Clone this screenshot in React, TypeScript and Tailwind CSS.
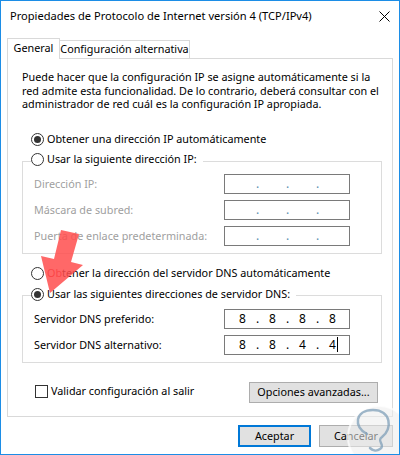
const font = { fontFamily: '"Noto Sans", "Open Sans", sans-serif' };

const Radio = ({ checked }: { checked?: boolean }) => (
	<span className="w-[13px] h-[13px] rounded-full border border-[#333] bg-white flex items-center justify-center shrink-0">
		{checked && <span className="w-[7px] h-[7px] rounded-full bg-[#333]" />}
	</span>
);

const IpBox = ({ parts, cursor }: { parts?: string[]; cursor?: boolean }) => {
	const vals = parts ?? ["", "", "", ""];
	const active = !!parts;
	return (
		<div className="w-[126px] h-[20px] border border-[#7a7a7a] bg-white flex items-center pl-[4px] leading-[18px] text-[12px]">
			{vals.map((v, i) => (
				<div key={i} className="flex">
					<span className="w-[27px] text-center text-black">
						<span className="relative">
							{v}
							{cursor && i === 3 && <span className="absolute -right-[2px] top-[1px] w-px h-[15px] bg-black" />}
						</span>
					</span>
					{i < 3 && (
						<span className={`w-[3px] flex justify-center ${active ? "text-black" : "text-[#5b8fb0]"}`}>.</span>
					)}
				</div>
			))}
		</div>
	);
};

const Row = ({ label, disabled, parts, cursor }: { label: string; disabled?: boolean; parts?: string[]; cursor?: boolean }) => (
	<div className="flex items-center">
		<span className={`w-[190px] whitespace-nowrap ${disabled ? "text-[#a0a0a0]" : "text-black"}`}>{label}</span>
		<IpBox parts={parts} cursor={cursor} />
	</div>
);

const App = () => {
	return (
		<div className="w-[400px] h-[455px] bg-white border border-[#1c8de6] flex flex-col relative overflow-hidden text-[10.8px] text-black whitespace-nowrap" style={font}>
			{/* title bar */}
			<div className="h-[30px] flex items-center justify-between pl-[9px] pr-[9px]">
				<span className="text-[11.1px]">Propiedades de Protocolo de Internet versión 4 (TCP/IPv4)</span>
				<svg width="11" height="11" viewBox="0 0 11 11">
					<path d="M0.5 0.5 L10.5 10.5 M10.5 0.5 L0.5 10.5" stroke="#000" strokeWidth="1" />
				</svg>
			</div>

			<div className="px-[6px] mt-[7px] flex flex-col">
				{/* tabs */}
				<div className="flex items-end">
					<div className="w-[53px] h-[21px] border border-b-0 border-[#d9d9d9] bg-white -mb-px relative z-10 flex items-center justify-center pb-[2px]">
						General
					</div>
					<div className="w-[130px] h-[18px] border border-l-0 border-b-0 border-[#d9d9d9] bg-white flex items-center justify-center">
						Configuración alternativa
					</div>
				</div>

				{/* panel */}
				<div className="h-[359px] border border-[#d9d9d9] flex flex-col">
					<div className="mt-[11px] ml-[14px] h-[41px] leading-[13.5px]">
						<div>Puede hacer que la configuración IP se asigne automáticamente si la</div>
						<div>red admite esta funcionalidad. De lo contrario, deberá consultar con el</div>
						<div>administrador de red cuál es la configuración IP apropiada.</div>
					</div>

					<div className="mt-[21px] ml-[23px] h-[15px] flex items-center gap-[3px]">
						<Radio checked />
						<span>Obtener una dirección IP automáticamente</span>
					</div>

					<div className="mt-[14px] ml-[14px] mr-[10px] h-[93px] border border-[#dcdcdc] relative pt-[12px] pb-[7px] pl-[11px] flex flex-col gap-[6px]">
						<div className="absolute left-[8px] -top-[10px] h-[15px] flex items-center gap-[3px] bg-white pr-[6px]">
							<Radio />
							<span>Usar la siguiente dirección IP:</span>
						</div>
						<Row label="Dirección IP:" disabled />
						<Row label="Máscara de subred:" disabled />
						<Row label="Puerta de enlace predeterminada:" disabled />
					</div>

					<div className="mt-[12px] ml-[23px] h-[15px] flex items-center gap-[3px]">
						<Radio />
						<span>
							<span className="text-[#e0101a]">Ob</span>tener la dirección del servidor DNS automáticamente
						</span>
					</div>

					<div className="mt-[14px] ml-[14px] mr-[10px] h-[68px] border border-[#dcdcdc] relative pt-[13px] pb-[7px] pl-[11px] flex flex-col gap-[6px]">
						<div className="absolute left-[8px] -top-[9px] h-[15px] flex items-center gap-[3px] bg-white pr-[6px]">
							<Radio checked />
							<span>Usar las siguientes direcciones de servidor DNS:</span>
						</div>
						<Row label="Servidor DNS preferido:" parts={["8", "8", "8", "8"]} />
						<Row label="Servidor DNS alternativo:" parts={["8", "8", "4", "4"]} cursor />
					</div>

					<div className="mt-[19px] ml-[27px] mr-[14px] flex items-center justify-between">
						<div className="flex items-center gap-[3px] -mt-[2px]">
							<span className="w-[13px] h-[13px] border border-[#333] bg-white" />
							<span>Validar configuración al salir</span>
						</div>
						<button className="w-[129px] h-[21px] bg-[#e1e1e1] border border-[#adadad] flex items-center justify-center">
							Opciones avanzadas...
						</button>
					</div>
				</div>

				{/* dialog buttons */}
				<div className="mt-[8px] flex justify-end gap-[8px]">
					<button className="w-[73px] h-[22px] bg-[#e1e1e1] border-2 border-[#0078d7] flex items-center justify-center">
						Aceptar
					</button>
					<button className="w-[74px] h-[22px] bg-[#e1e1e1] border border-[#adadad] flex items-center justify-center">
						Cancelar
					</button>
				</div>
			</div>

			{/* red arrow annotation */}
			<svg className="absolute left-0 top-0 pointer-events-none" width="400" height="455">
				<polygon
					points="60,229 78,233 70,261 82,264 49,292 40,255 53,258"
					fill="#ff4d4d"
					opacity="0.85"
				/>
			</svg>

			{/* watermark */}
			<svg className="absolute left-0 top-0 pointer-events-none" width="400" height="455">
				<circle cx="378" cy="436" r="31" fill="#ececec" opacity="0.55" />
				<circle cx="378" cy="436" r="31" fill="none" stroke="#ffffff" strokeWidth="2" opacity="0.7" />
				<path
					d="M366 433 C352 426 354 409 372 409 C390 409 392 428 381 436 C375 440 385 444 379 448 C375 451 371 449 369 447"
					fill="none"
					stroke="#7f9fb8"
					strokeWidth="2.5"
					strokeLinecap="round"
					opacity="0.75"
				/>
			</svg>
		</div>
	);
};

export default App;
